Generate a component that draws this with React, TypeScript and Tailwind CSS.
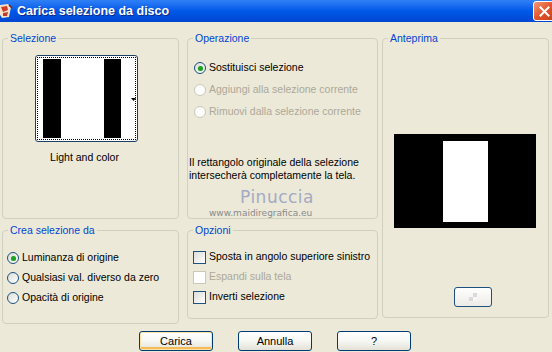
import React from 'react';

type GroupProps = { title: string; className: string; children?: React.ReactNode };

const Group: React.FC<GroupProps> = ({ title, className, children }) => (
  <fieldset className={`border border-[#D0D0BF] rounded-[4px] ${className}`}>
    <legend className="ml-[5px] px-[2px] leading-[13px] text-[#0046D5]">{title}</legend>
    {children}
  </fieldset>
);

type OptProps = { label: string; checked?: boolean; disabled?: boolean; h: string };

const Radio: React.FC<OptProps> = ({ label, checked, disabled, h }) => (
  <div className={`flex items-center gap-[3px] whitespace-nowrap ${h}`}>
    <span
      className={`flex h-[12px] w-[12px] shrink-0 items-center justify-center rounded-full border ${
        disabled ? 'border-[#CAC8BB] bg-white' : 'border-[#1C5180] bg-linear-to-br from-[#DCDCD7] to-white'
      }`}
    >
      {checked && <span className="h-[5px] w-[5px] rounded-full bg-[#21A121] shadow-[0_0_1px_#7BD47B]" />}
    </span>
    <span className={disabled ? 'text-[#ACA899]' : 'text-black'}>{label}</span>
  </div>
);

const Check: React.FC<OptProps> = ({ label, disabled, h }) => (
  <div className={`flex items-center gap-[3px] whitespace-nowrap ${h}`}>
    <span
      className={`h-[13px] w-[13px] shrink-0 border ${
        disabled ? 'border-[#CAC8BB] bg-white' : 'border-[#1C5180] bg-linear-to-br from-[#DCDCD7] to-white'
      }`}
    />
    <span className={disabled ? 'text-[#ACA899]' : 'text-black'}>{label}</span>
  </div>
);

const XpButton: React.FC<{ label: string; isDefault?: boolean }> = ({ label, isDefault }) => (
  <button
    className={`h-[20px] w-[74px] rounded-[3px] border border-[#003C74] bg-linear-to-b from-white via-[#F7F7F4] to-[#E3E1D6] text-[11px] leading-none text-black ${
      isDefault ? 'shadow-[inset_0_0_0_1px_#FCE3A6,inset_0_-2px_0_1px_#F4BC58]' : ''
    }`}
  >
    {label}
  </button>
);

export default function App() {
  return (
    <div className="h-[352px] w-[552px] overflow-hidden bg-[#ECE9D8] font-['Liberation_Sans',Arial,sans-serif] text-[10.5px] text-black">
      {/* title bar */}
      <div className="flex h-[22px] items-center bg-linear-to-b from-[#2F80F6] via-[#0058E8] to-[#0046D0]">
        <svg width="14" height="16" viewBox="0 0 14 16" className="ml-[-1px] shrink-0">
          <path d="M1 2 L9 1 L12 4 L10 14 L3 15 L0 10 Z" fill="#F6E2C8" />
          <path d="M2 4 L8 3 L9 7 L4 9 Z" fill="#D23A2A" />
          <path d="M4 10 L9 9 L8 13 L4 13 Z" fill="#C0392B" />
          <path d="M10 2 L13 5" stroke="#7A1F14" strokeWidth="1.5" />
        </svg>
        <span className="ml-[4px] text-[12.5px] font-bold leading-none text-white [text-shadow:1px_1px_0_#0A2A8A]">
          Carica selezione da disco
        </span>
        <div className="ml-auto mr-[-3px] flex h-[20px] w-[22px] items-center justify-center rounded-[3px] border border-white bg-linear-to-br from-[#F09A78] via-[#E2552B] to-[#C8401C]">
          <svg width="11" height="11" viewBox="0 0 11 11">
            <path d="M1.5 1.5 L9.5 9.5 M9.5 1.5 L1.5 9.5" stroke="white" strokeWidth="2" strokeLinecap="square" />
          </svg>
        </div>
      </div>

      {/* body */}
      <div className="flex flex-col pl-[2px] pt-[10px]">
        <div className="flex h-[292px] items-start">
          {/* left column */}
          <div className="flex w-[177px] flex-col gap-[5px]">
            <Group title="Selezione" className="h-[187px]">
              <div className="relative ml-[32px] mt-[10px] h-[87px] w-[103px] rounded-[3px] border border-[#1C3F66] bg-white p-[1px]">
                <div className="flex h-full w-full border border-dotted border-black py-[1px]">
                  <div className="w-[5px]" />
                  <div className="w-[18px] bg-black" />
                  <div className="w-[43px]" />
                  <div className="w-[17px] bg-black" />
                </div>
                <svg width="5" height="3" viewBox="0 0 5 3" className="absolute right-[1px] top-[42px]">
                  <path d="M0 0 H5 L2.5 3 Z" fill="black" />
                </svg>
              </div>
              <div className="ml-[30px] mt-[9px] w-[103px] text-center leading-[13px]">Light and color</div>
            </Group>
            <Group title="Crea selezione da" className="h-[100px]">
              <div className="mt-[11px] pl-[4px]">
                <Radio label="Luminanza di origine" checked h="h-[20px]" />
                <Radio label="Qualsiasi val. diverso da zero" h="h-[20px]" />
                <Radio label="Opacità di origine" h="h-[20px]" />
              </div>
            </Group>
          </div>

          {/* middle column */}
          <div className="ml-[8px] flex w-[191px] flex-col gap-[5px]">
            <Group title="Operazione" className="h-[187px]">
              <div className="mt-[12px] pl-[6px]">
                <Radio label="Sostituisci selezione" checked h="h-[22px]" />
                <Radio label="Aggiungi alla selezione corrente" disabled h="h-[22px]" />
                <Radio label="Rimuovi dalla selezione corrente" disabled h="h-[22px]" />
              </div>
              <p className="mt-[33px] whitespace-nowrap pl-[1px] leading-[13px]">
                Il rettangolo originale della selezione
                <br />
                intersecherà completamente la tela.
              </p>
              <div className="ml-[52px] mt-[5px] font-['DejaVu_Sans',sans-serif] text-[17px] leading-[20px] tracking-[0.5px] text-[#A4A9C4]">
                Pinuccia
              </div>
              <div className="ml-[21px] font-['DejaVu_Sans',sans-serif] text-[9px] leading-[12px] text-[#8A8A8A]">
                www.maidiregrafica.eu
              </div>
            </Group>
            <Group title="Opzioni" className="h-[95px]">
              <div className="mt-[10px] pl-[5px]">
                <Check label="Sposta in angolo superiore sinistro" h="h-[20px]" />
                <Check label="Espandi sulla tela" disabled h="h-[20px]" />
                <Check label="Inverti selezione" h="h-[20px]" />
              </div>
            </Group>
          </div>

          {/* right column */}
          <div className="ml-[4px] w-[167px]">
            <Group title="Anteprima" className="h-[286px]">
              <div className="ml-[11px] mt-[89px] h-[94px] w-[142px] bg-black pt-[7px]">
                <div className="ml-[49px] h-[81px] w-[45px] bg-white" />
              </div>
              <div className="ml-[71px] mt-[59px] flex h-[20px] w-[38px] items-center justify-center rounded-[3px] border border-[#1C5180] bg-linear-to-b from-white to-[#ECEBE6]">
                <div className="grid grid-cols-2">
                  <div className="h-[4px] w-[4px] bg-[#F7F7F7]" />
                  <div className="h-[4px] w-[4px] bg-[#DADADA]" />
                  <div className="h-[4px] w-[4px] bg-[#DADADA]" />
                  <div className="h-[4px] w-[4px] bg-[#F7F7F7]" />
                </div>
              </div>
            </Group>
          </div>
        </div>

        {/* buttons */}
        <div className="ml-[137px] mt-[7px] flex gap-[25px]">
          <XpButton label="Carica" isDefault />
          <XpButton label="Annulla" />
          <XpButton label="?" />
        </div>
      </div>
    </div>
  );
}
